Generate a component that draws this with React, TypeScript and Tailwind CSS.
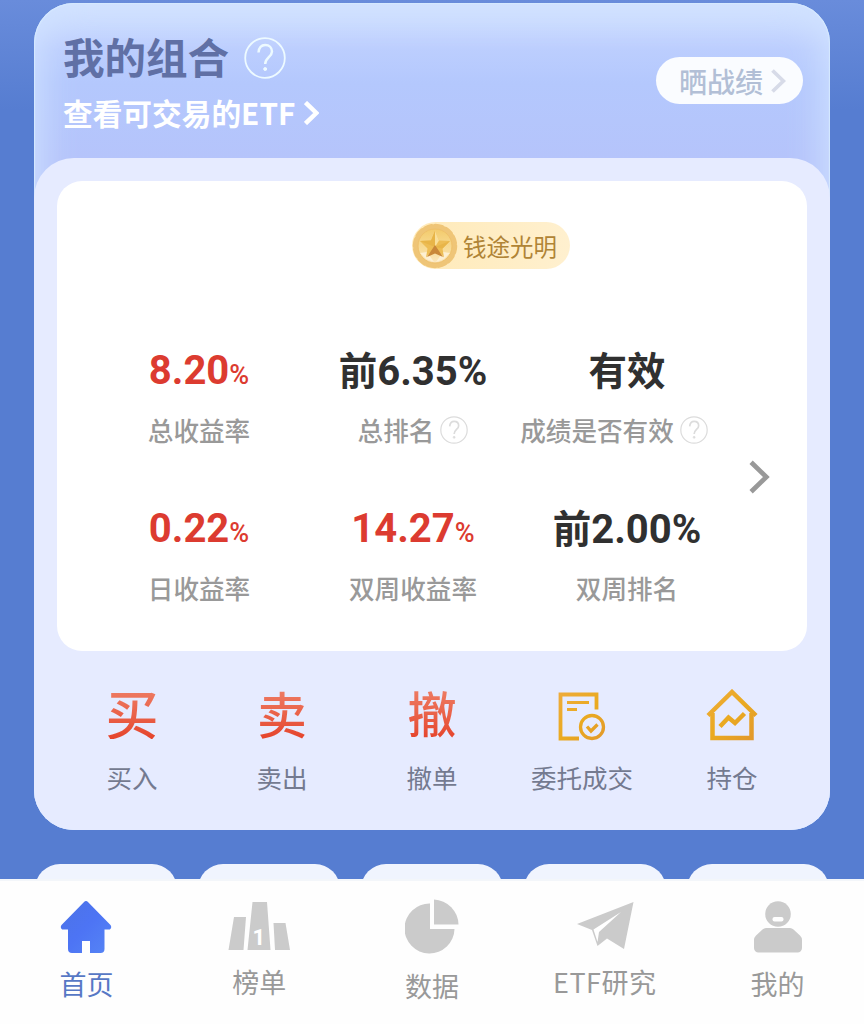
import React from "react";
import clsx from "clsx";

const cjk = "font-['Noto_Sans_CJK_SC',sans-serif]";

function HelpIcon({ className }: { className?: string }) {
  return (
    <svg viewBox="0 0 42 42" fill="none" stroke="currentColor" className={className}>
      <circle cx="21" cy="21" r="19.8" strokeWidth="1.8" />
      <path d="M14.500 15.500c.5-5 3.200-7.500 6.700-7.500 4 0 6.800 2.600 6.800 6.500 0 5.500-6.800 6-6.800 12.500" strokeWidth="2.500" />
      <circle cx="21.200" cy="32" r="1.500" fill="currentColor" strokeWidth="1" />
    </svg>
  );
}

function Chevron({ className, width = 4 }: { className?: string; width?: number }) {
  return (
    <svg viewBox="0 0 20 32" fill="none" stroke="currentColor" strokeWidth={width} className={className}>
      <path d="M2 2 16.500 16 2 30" />
    </svg>
  );
}

function MedalIcon() {
  return (
    <svg viewBox="0 0 46 46" className="w-[46px] h-[46px] shrink-0">
      <defs>
        <linearGradient id="medal" x1="0" y1="0" x2="0" y2="1">
          <stop offset="0" stopColor="#f3cb6c" />
          <stop offset=".6" stopColor="#f8dc98" />
          <stop offset="1" stopColor="#fbe6bd" />
        </linearGradient>
      </defs>
      <circle cx="23" cy="23" r="19" fill="url(#medal)" />
      <circle cx="23" cy="23" r="19" fill="none" stroke="#efc577" strokeWidth="6.500" strokeLinecap="round" strokeDasharray="6 3.948" />
      <circle cx="23" cy="23" r="17" fill="url(#medal)" stroke="#eec06a" strokeWidth="1" />
      <path d="m8 30 7-1 7 10-8-3zM38 30l-7-1-7 10 8-3z" fill="#fdf0d3" />
      <path d="m23 8 4 9.500L38 18l-7.500 7.500 1.500 9-9-10-9 10 1.500-9L8 18l11-.5z" fill="#edbd55" />
      <path d="m23 8-4 9.500L8 18l15 6zM38 18l-15 6 7.500 1.500z" fill="#e8b548" />
      <path d="m23 8 4 9.500L23 24z" fill="#fae09a" />
      <path d="m23 22-8 12 8-3.500 8 3.500z" fill="#c98739" />
    </svg>
  );
}

const stats = [
  { value: "8.20", label: "总收益率", up: true },
  { prefix: "前", value: "6.35%", label: "总排名", help: true },
  { prefix: "有效", value: "", label: "成绩是否有效", help: true, shift: "mr-[26px]" },
  { value: "0.22", label: "日收益率", up: true },
  { value: "14.27", label: "双周收益率", up: true },
  { prefix: "前", value: "2.00%", label: "双周排名" },
];

function OrderIcon() {
  return (
    <svg viewBox="0 0 50 50" fill="none" stroke="url(#gold)" className="w-[50px] h-[50px]">
      <path d="M39.500 18.500V3.500H3.500v44H22" strokeWidth="3.800" />
      <path d="M10 11.500h22M10 18.500h10" strokeWidth="3.200" />
      <circle cx="35" cy="36" r="11.500" strokeWidth="3.300" />
      <path d="m30 35.500 4 4.500 6.500-6.500" strokeWidth="3.300" />
    </svg>
  );
}

function HoldingIcon() {
  return (
    <svg viewBox="0 0 52 52" fill="none" stroke="url(#gold)" className="w-[52px] h-[52px] mb-[2px]">
      <path d="M2 26.500 26 3l24 23.500" strokeWidth="4.500" />
      <path d="M6.500 24v25h39V24" strokeWidth="4.500" />
      <path d="m14 37.500 8.500-9 6.500 5.500 9.500-9.500" strokeWidth="4.500" />
    </svg>
  );
}

const glyph = "bg-gradient-to-b from-[#ee8068] to-[#e5432b] bg-clip-text text-transparent font-medium leading-[54px] mb-[8px]";

const actions = [
  { label: "买入", icon: <span className={clsx(glyph, "text-[53px]")}>买</span> },
  { label: "卖出", icon: <span className={clsx(glyph, "text-[50px]")}>卖</span> },
  { label: "撤单", icon: <span className={clsx(glyph, "text-[49px]")}>撤</span> },
  { label: "委托成交", icon: <OrderIcon /> },
  { label: "持仓", icon: <HoldingIcon /> },
];

const tabs = [
  {
    label: "首页",
    active: true,
    offset: "mt-0",
    icon: (
      <svg viewBox="0 0 52 54" className="w-[52px] h-[54px]">
        <defs>
          <linearGradient id="home" x1="0" y1="0" x2="1" y2="1">
            <stop offset="0" stopColor="#4c73e6" />
            <stop offset=".5" stopColor="#4d74f4" />
            <stop offset="1" stopColor="#5685f5" />
          </linearGradient>
        </defs>
        <path
          d="M23.800 2.200a3 3 0 0 1 4.400 0L50.500 25c1.400 1.600.6 4.500-1.700 4.500H44.500V49a4 4 0 0 1-4 4H30V41h-8v12H12a4 4 0 0 1-4-4V29.500H3.200C.9 29.500.1 26.600 1.500 25z"
          fill="url(#home)"
        />
      </svg>
    ),
  },
  {
    label: "榜单",
    offset: "mt-[-2px]",
    icon: (
      <svg viewBox="0 0 64 54" fill="#cbcbcb" className="w-[64px] h-[54px]">
        <path d="M7 17h12l-2.500 33H1.500zM25.500 2H40l3.500 48h-23zM46.500 23h12l4.500 27H48z" />
        <text x="25.500" y="44.500" fill="#fff" className="font-['Roboto',sans-serif] text-[22px] font-bold">1</text>
      </svg>
    ),
  },
  {
    label: "数据",
    offset: "mt-[2px]",
    icon: (
      <svg viewBox="0 0 54 56" fill="#cbcbcb" className="w-[54px] h-[56px]">
        <path d="M25 4.500A25 25 0 1 0 49.500 30H25z" />
        <path d="M29 .500A25.500 25.500 0 0 1 53.500 25.500H29z" />
      </svg>
    ),
  },
  {
    label: "ETF研究",
    offset: "mt-[-2px] tracking-[0.5px]",
    icon: (
      <svg viewBox="0 0 58 54" fill="#cbcbcb" className="w-[58px] h-[54px]">
        <path d="M57.500 2 1 24l15 6 5.500 16 9.500-7.500 17 10.500z" />
        <path d="M45 12 17.500 29.500 21.500 42l1.500-10z" fill="#fff" />
      </svg>
    ),
  },
  {
    label: "我的",
    offset: "mt-0",
    icon: (
      <svg viewBox="0 0 50 54" fill="#cbcbcb" className="w-[50px] h-[54px]">
        <circle cx="25" cy="14" r="12.800" />
        <path d="M13 28h24q2 0 3.500 1.500l6.500 6q2 2 2 4.500v8a4.500 4.500 0 0 1-4.500 4.500h-39A4.500 4.500 0 0 1 1 48v-8q0-2.500 2-4.500l6.500-6Q11 28 13 28z" />
        <rect x="19.500" y="17" width="11" height="4.500" rx="2" fill="#fff" />
      </svg>
    ),
  },
];

export default function App() {
  return (
    <div className={clsx("w-[865px] h-[1024px] flex flex-col overflow-hidden bg-white", cjk)}>
      <svg className="absolute w-0 h-0">
        <linearGradient id="gold" x1="0" y1="0" x2="52" y2="52" gradientUnits="userSpaceOnUse">
          <stop offset="0" stopColor="#eeab3d" />
          <stop offset=".5" stopColor="#eaaa20" />
          <stop offset="1" stopColor="#e1962d" />
        </linearGradient>
      </svg>

      <main className="w-[864px] h-[879px] shrink-0 overflow-hidden pt-[3px] pl-[34px] bg-[linear-gradient(#698cdb,#567dd1_110px)]">
        {/* Portfolio card */}
        <section className="w-[796px] h-[827px] rounded-[40px] overflow-hidden bg-[linear-gradient(#d3e3ff,#bccefe_46px,#b4c8fd_80px,#b5c4fb_155px)] shadow-[inset_0_0_36px_6px_#d0e2ff,inset_0_0_1px_1px_#e0f6ff]">
          <header className="h-[155px] pl-[29px] pr-[27px] flex justify-between">
            <div className="pt-[26px]">
              <div className="flex items-center gap-[15px] h-[54px]">
                <h1 className="text-[41.500px] leading-[54px] font-bold text-[#6070a5]">我的组合</h1>
                <HelpIcon className="w-[42px] h-[42px] text-[#edfaff] mt-[4px]" />
              </div>
              <a className="flex items-center gap-[9px] h-[54px] text-white mt-[3px]">
                <span className="text-[29.700px] leading-[54px] font-bold">查看可交易的ETF</span>
                <Chevron className="w-[15px] h-[24px]" width={6} />
              </a>
            </div>
            <button className="mt-[54px] w-[147px] h-[47px] rounded-full bg-[#fafcff] flex items-center pl-[23px] gap-[8px] text-[#b2bfd6]">
              <span className="text-[28px] leading-[47px] font-medium pt-[2px]">晒战绩</span>
              <Chevron className="w-[15px] h-[24px] text-[#d7dbe8]" width={5} />
            </button>
          </header>

          <div className="h-[672px] rounded-t-[40px] bg-[#e6ebff] pt-[23px] px-[23px]">
            <div className="h-[470px] rounded-[25px] bg-white flex flex-col">
              <div className="h-[129px] pt-[41px] pl-[355px]">
                <div className="w-[158px] h-[47px] rounded-full bg-[linear-gradient(90deg,#ffeab8,#fff0cf)] flex items-center gap-[5px] text-[#b08436]">
                  <MedalIcon />
                  <span className="text-[23.500px] leading-[47px] pt-[2px]">钱途光明</span>
                </div>
              </div>
              <div className="flex items-start pl-[35px]">
                <div className="grid grid-cols-3 w-[642px] gap-y-[38px] pt-[30px]">
                  {stats.map((s) => (
                    <div key={s.label} className="flex flex-col items-center h-[120px]">
                      <div
                        className={clsx(
                          "flex items-baseline h-[60px] leading-[60px] whitespace-nowrap",
                          s.up ? "text-[#dc3b30] pt-px" : "text-[#303030] -mt-[2px] mb-[2px]"
                        )}
                      >
                        {s.prefix && <span className="text-[38.500px] font-bold">{s.prefix}</span>}
                        <span className="font-['Roboto',sans-serif] text-[40px] font-bold">{s.value}</span>
                        {s.up && <span className="font-['Roboto',sans-serif] text-[27px] font-medium">%</span>}
                      </div>
                      <div
                        className={clsx(
                          "flex items-center gap-[6px] h-[60px] leading-[60px] text-[25.600px] font-medium text-[#999] whitespace-nowrap",
                          s.shift
                        )}
                      >
                        {s.label}
                        {s.help && <HelpIcon className="w-[28px] h-[28px] text-[#dcdcdc]" />}
                      </div>
                    </div>
                  ))}
                </div>
                <Chevron className="w-[21px] h-[34px] ml-[15px] mt-[150px] text-[#999]" width={4.5} />
              </div>
            </div>

            {/* Quick actions */}
            <div className="grid grid-cols-5 pt-[35px]">
              {actions.map((a) => (
                <a key={a.label} className="flex flex-col items-center">
                  <span className="h-[60px] flex items-center justify-center">{a.icon}</span>
                  <span className="h-[60px] leading-[62px] text-[25.500px] text-[#747a90]">{a.label}</span>
                </a>
              ))}
            </div>
          </div>
        </section>

        <div className="mt-[34px] flex gap-[21px] pl-px">
          {[0, 1, 2, 3, 4].map((i) => (
            <div key={i} className="w-[142px] h-[80px] shrink-0 rounded-[25px] bg-[#f0f4fe]" />
          ))}
        </div>
      </main>

      {/* Bottom tab bar */}
      <nav className="w-[864px] h-[145px] shrink-0 grid grid-cols-5 bg-[#fefefe] border-t-2 border-[#f3f6fa] pt-[18px]">
        {tabs.map((t) => (
          <a
            key={t.label}
            className={clsx("flex flex-col items-center", t.active ? "text-[#5778c5]" : "text-[#999]")}
          >
            <span className="h-[56px] flex items-center">{t.icon}</span>
            <span className={clsx("text-[27px] leading-[58px]", t.offset)}>{t.label}</span>
          </a>
        ))}
      </nav>
    </div>
  );
}
